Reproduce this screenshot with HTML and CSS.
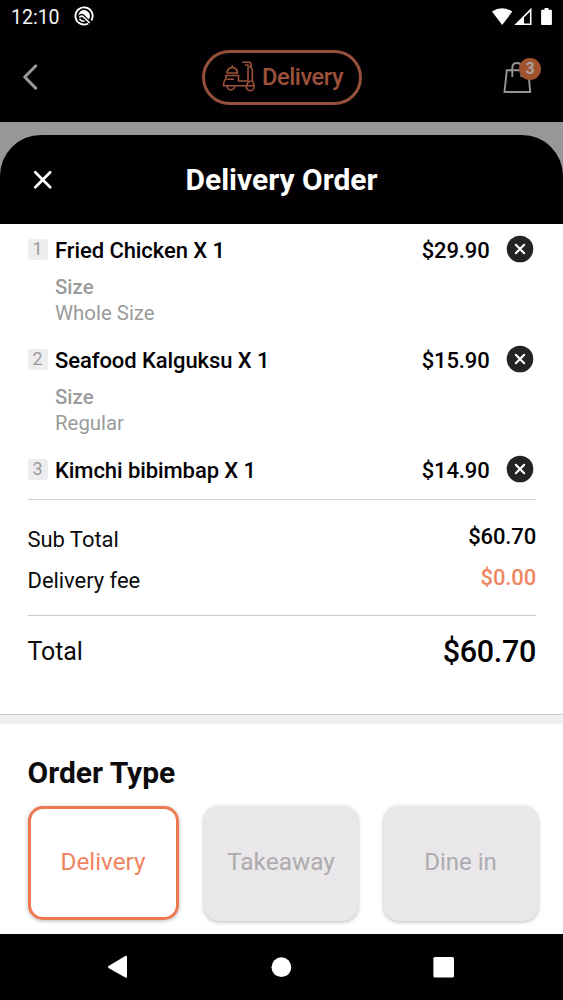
FILE: index.html
```html
<!DOCTYPE html>
<html lang="en">
<head>
<meta charset="utf-8">
<title>Delivery Order</title>
<link rel="stylesheet" href="styles.css">
</head>
<body>
<div class="screen">
  <div class="status">
    <span class="clock">12:10</span>
    <svg class="status-app" width="20" height="20" viewBox="0 0 20 20"><path d="M14.2 17.5A8.6 8.6 0 1 1 17.4 14.4" fill="none" stroke="#fff" stroke-width="1.9"/><path d="M4.4 9.8A5.8 5.8 0 1 1 14.8 13.4L9.6 8.3C7.8 7.2 5.8 7.8 4.4 9.8Z" fill="#fff"/><path d="M5.3 11.5Q7.6 9 9.5 11L15.8 17" fill="none" stroke="#fff" stroke-width="1.7"/><path d="M5.5 13Q7.5 15.6 10.5 15.3" fill="none" stroke="#fff" stroke-width="1.5"/></svg>
    <svg class="status-icons" width="62" height="18" viewBox="0 0 62 18"><path d="M0 3.6Q10-3.2 20.3 3.6L10.2 17Z" fill="#fff"/><path d="M24.2 16.2L38.7 1.6V16.2Z" fill="none" stroke="#fff" stroke-width="1.6"/><path d="M23 17L32 8V17Z" fill="#fff"/><path d="M50 1.8h2.5V0h4v1.8H59q.9 0 .9 1v13.3q0 .9-.9.9h-9q-.9 0-.9-.9V2.8q0-1 .9-1Z" fill="#fff"/></svg>
  </div>
  <header class="topbar">
    <svg class="back" width="18" height="28" viewBox="0 0 18 28"><path d="M14.7 3L3.7 14L14.7 25.2" fill="none" stroke="#9a989a" stroke-width="3.1" stroke-linecap="round" stroke-linejoin="round"/></svg>
    <div class="mode">
      <svg width="34" height="33" viewBox="0 0 34 33" fill="none" stroke="#9c513a" stroke-width="1.6" stroke-linejoin="round" stroke-linecap="round"><path d="M5 13C5.3 9.500 7.500 7.600 10.300 7.600S15.300 9.500 15.600 13Z"/><path d="M10.300 5.700v1.800"/><path d="M4 15.500H16.500V21H26V8.500"/><path d="M5.500 19.300H11.500M4 15.500V18.500Q1.500 20.800 1.500 25.800H25C24.600 22.800 26.500 21.200 30.300 21V10C30.300 8.500 29.800 7.800 28.800 7.500"/><path d="M20.800 2.200H27Q29 2.300 29 4.500V7H26V5H23.500"/><path d="M30.300 21Q32.300 23.200 31.800 25.800H25"/><path d="M5 26A3.900 3.900 0 1 0 12.800 26M24.400 26A3.900 3.900 0 1 0 32 26"/></svg>
      <span>Delivery</span>
    </div>
    <div class="bag">
      <svg width="30" height="34" viewBox="0 0 30 34" fill="none" stroke="#969496" stroke-width="1.9"><path d="M3.8 9.3H25.2L27.2 31H1.5Z"/><path d="M9.3 16V6.8C9.3 3.2 11.2 2 14 2S18.5 3.2 18.5 6.8V16"/></svg>
      <span class="count">3</span>
    </div>
  </header>
  <main class="backdrop">
    <div class="sheet-head">
      <svg class="close" width="20" height="20" viewBox="0 0 20 20"><path d="M2.3 2.3L17.2 17.2M17.2 2.3L2.3 17.2" stroke="#fff" stroke-width="2.7" stroke-linecap="round"/></svg>
      <h1>Delivery Order</h1>
    </div>
    <section class="order">
      <div class="item">
        <div class="row"><span class="num">1</span><span class="name">Fried Chicken X 1</span><span class="price">$29.90</span><svg class="remove" width="28" height="28" viewBox="0 0 28 28"><circle cx="14" cy="14" r="13.3" fill="#242426"/><path d="M9.8 9.8L18.2 18.2M18.2 9.8L9.8 18.2" stroke="#fff" stroke-width="2.1" stroke-linecap="round"/></svg></div>
        <div class="option"><b>Size</b><span>Whole Size</span></div>
      </div>
      <div class="item">
        <div class="row"><span class="num">2</span><span class="name">Seafood Kalguksu X 1</span><span class="price">$15.90</span><svg class="remove" width="28" height="28" viewBox="0 0 28 28"><circle cx="14" cy="14" r="13.3" fill="#242426"/><path d="M9.8 9.8L18.2 18.2M18.2 9.8L9.8 18.2" stroke="#fff" stroke-width="2.1" stroke-linecap="round"/></svg></div>
        <div class="option"><b>Size</b><span>Regular</span></div>
      </div>
      <div class="item last">
        <div class="row"><span class="num">3</span><span class="name">Kimchi bibimbap X 1</span><span class="price">$14.90</span><svg class="remove" width="28" height="28" viewBox="0 0 28 28"><circle cx="14" cy="14" r="13.3" fill="#242426"/><path d="M9.8 9.8L18.2 18.2M18.2 9.8L9.8 18.2" stroke="#fff" stroke-width="2.1" stroke-linecap="round"/></svg></div>
      </div>
      <div class="fees">
        <div class="fee"><span>Sub Total</span><b>$60.70</b></div>
        <div class="fee"><span>Delivery fee</span><b class="accent">$0.00</b></div>
      </div>
      <div class="total"><span>Total</span><b>$60.70</b></div>
    </section>
    <section class="types">
      <h2>Order Type</h2>
      <div class="choices">
        <div class="choice selected">Delivery</div>
        <div class="choice takeaway">Takeaway</div>
        <div class="choice">Dine in</div>
      </div>
    </section>
  </main>
  <nav class="nav">
    <svg width="563" height="66" viewBox="0 0 563 66" fill="#fff"><path d="M108.5 32L125.3 22Q127 21.3 127 23V42.5Q127 44.4 125.3 43.5L108.5 34Q107.3 33 108.5 32Z"/><circle cx="281.4" cy="33.2" r="9.9"/><rect x="433.4" y="23" width="20.6" height="20.6" rx="1.5"/></svg>
  </nav>
</div>
</body>
</html>
```
FILE: styles.css
```css
* { box-sizing: border-box; }
body { margin: 0; font-family: Roboto, sans-serif; color: #0b0b0d; background: #fff; }
h1, h2 { margin: 0; }
b { font-weight: 500; }
svg { display: block; flex: none; }
.screen { width: 563px; height: 1000px; display: flex; flex-direction: column; overflow: hidden; }
.status { height: 34px; flex: none; background: #020002; color: #f5f5f5; display: flex; align-items: flex-start; padding: 0 9px 0 11px; }
.clock { font-size: 19.5px; line-height: 22px; padding-top: 7px; width: 63px; }
.status-app { margin-top: 6px; }
.status-icons { margin: 8px 0 0 auto; }
.topbar { height: 88px; flex: none; background: #020002; display: grid; grid-template-columns: 1fr 160px 1fr; padding: 0 21px 0 21px; }
.back { margin-top: 29px; }
.mode { height: 55px; margin-top: 16px; border: 3px solid #94503b; border-radius: 28px; display: flex; align-items: center; padding-left: 17px; gap: 7px; color: #9c513a; font-size: 23.6px; font-weight: 500; letter-spacing: -0.4px; line-height: 28px; }
.mode svg { margin-top: -3px; }
.mode span { margin: -1px 0 0 -.5px; white-space: nowrap; }
.bag { position: relative; width: 39px; justify-self: end; padding-top: 27px; }
.count { position: absolute; left: 16px; top: 23.5px; width: 22px; height: 22px; border-radius: 50%; background: #a3522f; color: #aaa2a2; font-size: 16px; font-weight: 700; line-height: 22px; text-align: center; }
.backdrop { flex: 1; min-height: 0; background: #989698; padding-top: 13px; }
.sheet-head { height: 89px; background: #020002; border-radius: 41px 41px 0 0; display: grid; grid-template-columns: 60px 1fr 60px; align-items: center; }
.close { margin-left: 32.5px; }
h1 { color: #fff; font-size: 30px; font-weight: 700; text-align: center; line-height: 34px; white-space: nowrap; }
.order { background: #fff; height: 491px; padding: 0 27px 0 27.5px; border-bottom: 1px solid #ccc; }
.item { height: 110px; padding-top: 11px; }
.item.last { height: 56px; border-bottom: 1px solid #d3d3d3; }
.row { display: flex; align-items: center; height: 28px; color: #020002; font-size: 22px; letter-spacing: -.08px; font-weight: 500; line-height: 28px; padding-right: 2.5px; }
.num { width: 20px; height: 21px; margin-right: 7.5px; border-radius: 3px; background: #ededef; color: #9c9c9c; font-size: 18px; line-height: 20px; text-align: center; font-weight: 400; }
.name, .price { padding-top: 3px; }
.price { margin-left: auto; margin-right: 16px; letter-spacing: -.15px; }
.option { margin: 12px 0 0 27.5px; display: flex; flex-direction: column; font-size: 20.4px; line-height: 25.5px; color: #9b9b9b; }
.fees { height: 116px; padding-top: 24px; border-bottom: 1px solid #c9c9c9; }
.fee { height: 41px; display: flex; justify-content: space-between; font-size: 22px; line-height: 32px; letter-spacing: -.05px; }
.fee b, .total b { color: #020002; letter-spacing: -.15px; }
.fee b { margin-top: -3px; }
.fee .accent { color: #ef8662; }
.total { display: flex; justify-content: space-between; align-items: center; height: 71px; font-size: 25px; line-height: 36px; letter-spacing: -.1px; }
.total b { font-size: 30.5px; letter-spacing: -.3px; }
.types { height: 219px; background: #fff; border-top: 9px solid #efefef; padding: 31px 25px 0 27.5px; }
h2 { font-size: 30px; line-height: 36px; font-weight: 700; }
.choices { margin-top: 15px; display: grid; grid-template-columns: 151px 154px 154px; column-gap: 25.500px; }
.choice { height: 115px; border-radius: 15px; background: #e9e7ea; box-shadow: 0 1px 4px rgba(0, 0, 0, .28); color: #adabad; font-size: 24px; line-height: 112px; text-align: center; }
.choice.selected { height: 114px; background: #fff; border: 3px solid #ef7953; color: #f0835f; font-size: 24.3px; line-height: 106px; }
.choice.takeaway { font-size: 24.4px; }
.nav { height: 66px; flex: none; background: #020002; }
```
